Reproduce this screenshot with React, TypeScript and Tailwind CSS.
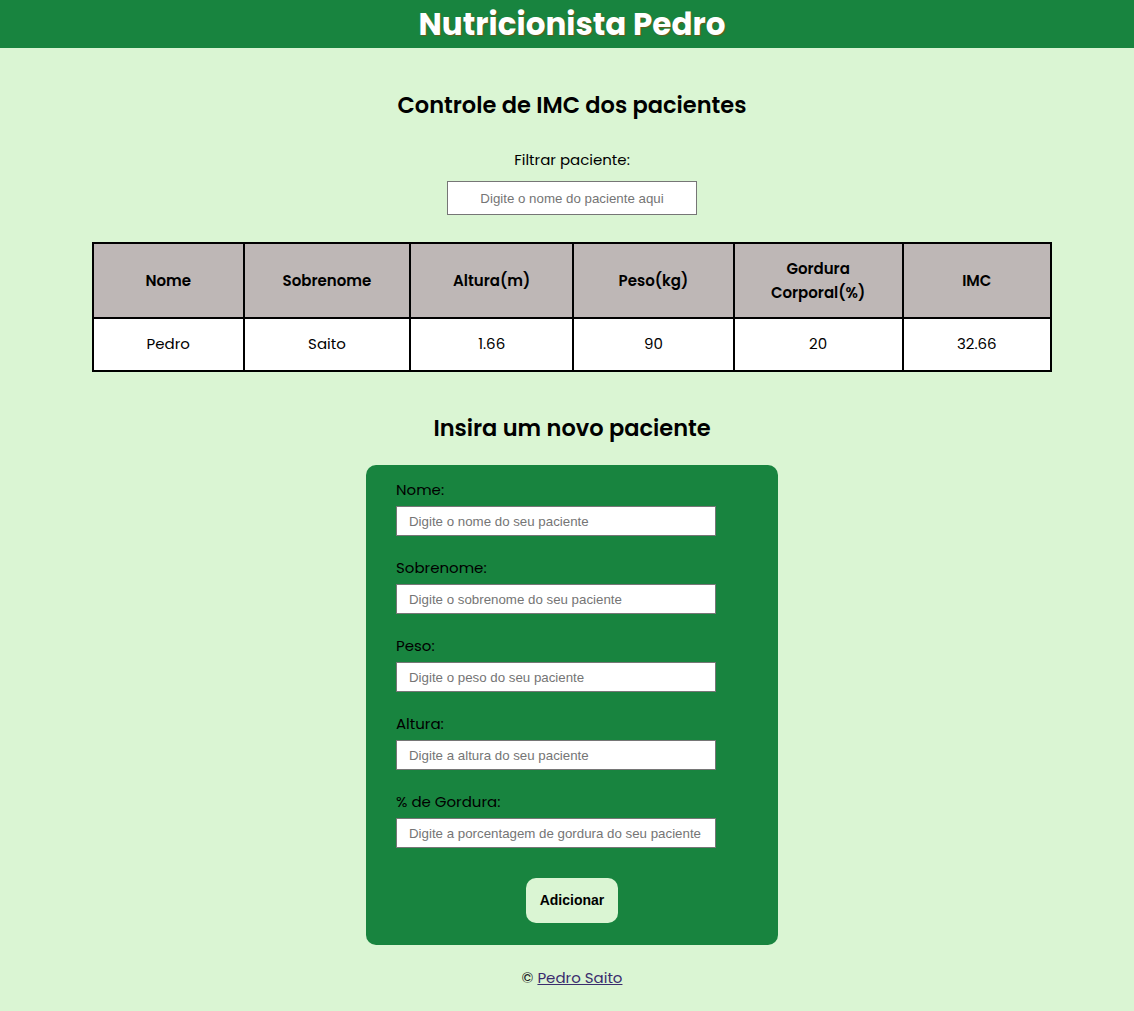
const headers = ["Nome", "Sobrenome", "Altura(m)", "Peso(kg)", "Gordura Corporal(%)", "IMC"];
const widths = ["w-[151px]", "w-[167px]", "w-[163px]", "w-[161px]", "w-[169px]", "w-[149px]"];
const row = ["Pedro", "Saito", "1.66", "90", "20", "32.66"];

const fields = [
  { label: "Nome:", placeholder: "Digite o nome do seu paciente" },
  { label: "Sobrenome:", placeholder: "Digite o sobrenome do seu paciente" },
  { label: "Peso:", placeholder: "Digite o peso do seu paciente" },
  { label: "Altura:", placeholder: "Digite a altura do seu paciente" },
  { label: "% de Gordura:", placeholder: "Digite a porcentagem de gordura do seu paciente" },
];

export default function App() {
  return (
    <div className="min-h-[1011px] bg-[#daf5d3] font-['Poppins','DejaVu_Sans',sans-serif] text-black">
      <header className="h-12 pl-[10px] bg-[#18843f] flex items-center justify-center">
        <h1 className="text-[31px] font-bold text-white leading-none [text-shadow:1px_1px_1px_#6b5a1a]">
          Nutricionista Pedro
        </h1>
      </header>

      <main className="pl-[10px] flex flex-col items-center">
        <h2 className="mt-[42px] text-[22.5px] font-semibold leading-[30px]">Controle de IMC dos pacientes</h2>

        <p className="mt-[28px] text-[15px] leading-6">Filtrar paciente:</p>
        <input
          className="mt-[9px] w-[250px] h-[34px] bg-white border border-[#767676] text-center text-[13.3px] font-['Liberation_Sans',Arial,sans-serif] placeholder:text-[#757575] outline-none"
          placeholder="Digite o nome do paciente aqui"
        />

        <table className="mt-[27px] w-[960px] border-separate border-spacing-0 border border-black text-[15px]">
          <thead>
            <tr className="bg-[#beb7b6]">
              {headers.map((h, i) => (
                <th key={h} className={`${widths[i]} h-[75px] border border-black font-semibold px-6 leading-[24px]`}>
                  {h}
                </th>
              ))}
            </tr>
          </thead>
          <tbody>
            <tr className="bg-white">
              {row.map((c, i) => (
                <td key={i} className="h-[53px] border border-black text-center">
                  {c}
                </td>
              ))}
            </tr>
          </tbody>
        </table>

        <h2 className="mt-[41px] text-[22.5px] font-semibold leading-[30px]">Insira um novo paciente</h2>

        <form className="mt-[22px] w-[412px] bg-[#18843f] rounded-[10px] pl-[30px] pr-[62px] pt-[13px] pb-[22px] flex flex-col">
          {fields.map((f) => (
            <div key={f.label} className="flex flex-col mb-[20px]">
              <label className="text-[15px] leading-[24px] text-black">{f.label}</label>
              <input
                className="mt-[4px] h-[30px] w-[320px] bg-white border border-[#767676] px-3 text-[13.3px] font-['Liberation_Sans',Arial,sans-serif] placeholder:text-[#757575] outline-none"
                placeholder={f.placeholder}
              />
            </div>
          ))}
          <button
            type="button"
            className="mt-[10px] self-center ml-[32px] w-[92px] h-[45px] rounded-[10px] bg-[#daf5d3] text-[14px] font-bold font-['Liberation_Sans',Arial,sans-serif]"
          >
            Adicionar
          </button>
        </form>

        <footer className="mt-[21px] text-[15px] leading-6 text-[#222]">
          © <a href="#" className="underline text-[#3a2d6e]">Pedro Saito</a>
        </footer>
      </main>
    </div>
  );
}
